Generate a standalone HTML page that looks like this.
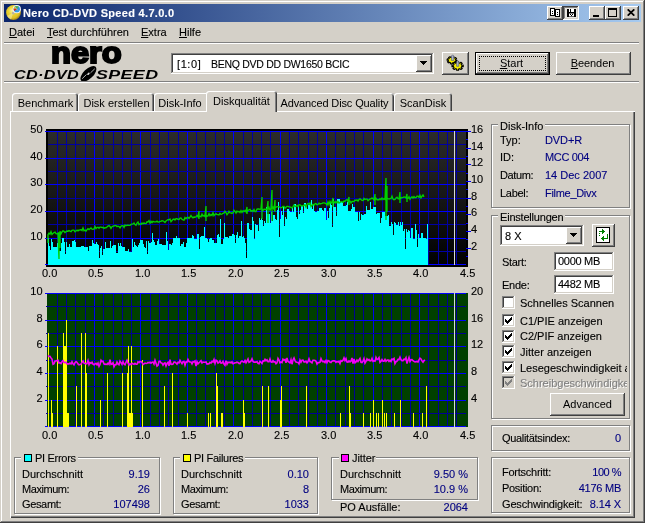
<!DOCTYPE html>
<html lang="de"><head><meta charset="utf-8"><title>Nero CD-DVD Speed 4.7.0.0</title>
<style>
*{box-sizing:border-box;margin:0;padding:0}
html,body{width:645px;height:523px;overflow:hidden;background:#d4d0c8}
body{position:relative;font-family:"Liberation Sans",sans-serif;font-size:11px;line-height:13px;color:#000}
.abs,.t,.charts{position:absolute}
.t{white-space:nowrap;height:13px;-webkit-text-stroke:.12px}
.charts{left:0;top:0}
.nv{color:#000080}
u{text-decoration:underline;text-underline-offset:1px}
/* window frame */
#frame{left:0;top:0;width:645px;height:523px;box-shadow:inset -1px -1px #404040,inset 1px 1px #d4d0c8,inset -2px -2px #808080,inset 2px 2px #fff}
#title{left:4px;top:4px;width:637px;height:18px;background:linear-gradient(to right,#0a246a,#a6caf0)}
#title .cap{left:19px;top:2.6px;color:#fff;font-weight:bold;font-size:11px;letter-spacing:.31px}
.btn{background:#d4d0c8;box-shadow:inset -1px -1px #404040,inset 1px 1px #fff,inset -2px -2px #808080,inset 2px 2px #d4d0c8}
.btn.pressed{box-shadow:inset -1px -1px #fff,inset 1px 1px #404040,inset -2px -2px #d4d0c8,inset 2px 2px #808080;background:#e9e7e3}
.btn .c{position:absolute;left:0;right:0;text-align:center;top:5px;height:13px}
.sunk{background:#fff;box-shadow:inset -1px -1px #fff,inset 1px 1px #808080,inset -2px -2px #d4d0c8,inset 2px 2px #404040}
.hsep{height:2px;border-top:1px solid #808080;border-bottom:1px solid #fff}
.grp{border:1px solid #808080;box-shadow:1px 1px #fff,inset 1px 1px #fff}
.gl{background:#d4d0c8;padding:0 2px}
.tab{top:93px;height:18px;background:#d4d0c8;border-top-left-radius:3px;border-top-right-radius:3px;box-shadow:inset 1px 1px #fff,inset -1px 0 #404040,inset -2px 0 #808080}
.tab.sel{top:91px;height:21px;z-index:3}
.tab.nr{box-shadow:inset 1px 1px #fff;border-top-right-radius:0}
.tab.nl{box-shadow:inset 0 1px #fff,inset -1px 0 #404040,inset -2px 0 #808080;border-top-left-radius:0}
.tab .c{position:absolute;left:0;right:0;text-align:center;top:4px;height:13px;white-space:nowrap}
.tab.sel .c{top:4px}
#page{left:10px;top:111px;width:625px;height:407px;box-shadow:inset 1px 1px #fff,inset -1px -1px #404040,inset -2px -2px #808080}
.cb{width:13px;height:13px}
.cb svg{position:absolute;left:3px;top:3px}
.dis{color:#808080;text-shadow:1px 1px #fff}
.sw{width:8px;height:8px;border:1px solid #000}
#root{position:absolute;left:0;top:0;width:645px;height:523px;will-change:transform}
</style></head><body><div id="root">
<div id="frame" class="abs"></div>
<div id="title" class="abs">
 <svg class="abs" style="left:2px;top:1px" width="16" height="16" viewBox="0 0 16 16"><defs><radialGradient id="cd" cx=".42" cy=".38" r=".62"><stop offset="0" stop-color="#fbf3a8"/><stop offset=".45" stop-color="#ead22c"/><stop offset=".8" stop-color="#dcc026"/><stop offset="1" stop-color="#a88818"/></radialGradient></defs><circle cx="7.5" cy="7.5" r="7.4" fill="url(#cd)"/><path d="M7.500,7.500 L1,11 A7.400,7.400 0 0 0 5,14.400z" fill="#f6eeb0" opacity=".55"/><circle cx="7.300" cy="8" r="1.5" fill="#b8b4a0"/><circle cx="10.8" cy="4.200" r="4.100" fill="#f4f6fa"/><circle cx="10.8" cy="4.200" r="3.100" fill="#2a98e8"/><path d="M7.900,3 A3.100,3.100 0 0 0 8.300,6 L10.800,4.200z" fill="#e02810"/><path d="M8.600,2 A3.100,3.100 0 0 1 12.600,1.700 L10.800,4.200z" fill="#58b848"/><path d="M8.700,1.700 L11.800,5.400" stroke="#f0a0a0" stroke-width=".8"/><path d="M8.300,2.200 L9.200,3.600" stroke="#f0e020" stroke-width="1.100"/></svg>
 <div class="t cap">Nero CD-DVD Speed 4.7.0.0</div>
 <div class="abs btn" style="left:543px;top:2px;width:16px;height:14px"><svg class="abs" style="left:0;top:0" width="16" height="14" viewBox="0 0 16 14" shape-rendering="crispEdges"><rect x="3.5" y="2.5" width="4" height="7" fill="#fff" stroke="#000"/><rect x="8.5" y="3.5" width="4" height="7" fill="#fff" stroke="#000"/><path d="M5,5h1v1h-1zM5,7h1v1h-1zM10,6h1v1h-1zM10,8h1v1h-1z" fill="#000"/></svg></div>
 <div class="abs btn pressed" style="left:559px;top:2px;width:16px;height:14px"><svg class="abs" style="left:0;top:0" width="16" height="14" viewBox="0 0 16 14" shape-rendering="crispEdges"><rect x="4" y="3" width="9" height="8" fill="#000"/><rect x="6" y="3" width="5" height="3" fill="#fff"/><rect x="7" y="3" width="1" height="3" fill="#000"/><rect x="6" y="7.5" width="5" height="2.900" fill="#fff" shape-rendering="auto"/><path d="M7,8h1v1h-1zM9,8h1v1h-1zM8,9h1v1h-1z" fill="#000"/></svg></div>
 <div class="abs btn" style="left:585px;top:2px;width:16px;height:14px"><div class="abs" style="left:4px;top:9px;width:6px;height:2px;background:#000"></div></div>
 <div class="abs btn" style="left:601px;top:2px;width:16px;height:14px"><div class="abs" style="left:3px;top:2px;width:9px;height:9px;border:1px solid #000;border-top-width:2px"></div></div>
 <div class="abs btn" style="left:619px;top:2px;width:16px;height:14px"><svg class="abs" style="left:4px;top:3px" width="8" height="7" viewBox="0 0 8 7"><path d="M.7,.3 L7.300,6.700 M7.300,.3 L.7,6.700" stroke="#000" stroke-width="1.7" fill="none"/></svg></div>
</div>
<!-- menu -->
<div class="t" style="left:9px;top:26px"><u>D</u>atei</div>
<div class="t" style="left:47px;top:26px"><u>T</u>est durchführen</div>
<div class="t" style="left:141px;top:26px"><u>E</u>xtra</div>
<div class="t" style="left:179px;top:26px"><u>H</u>ilfe</div>
<div class="abs hsep" style="left:4px;top:42px;width:635px"></div>
<!-- logo -->
<div class="t" id="nero" style="left:50.5px;top:37px;height:32px;line-height:32px;font-size:29px;font-weight:bold;letter-spacing:0;-webkit-text-stroke:2px #000;transform-origin:0 0;transform:scaleX(1.125)">nero</div>
<div class="t" id="cds" style="left:13.5px;top:67px;height:16px;line-height:16px;font-size:13.5px;font-weight:bold;font-style:italic;transform-origin:0 0;transform:scaleX(1.2);letter-spacing:.3px;-webkit-text-stroke:0">CD·DVD</div>
<svg class="abs" style="left:79px;top:65px" width="20" height="18" viewBox="0 0 20 18"><g transform="rotate(-44 9.4 8.8)"><ellipse cx="9.4" cy="8.8" rx="10" ry="4.9" fill="#000"/><path d="M1.500,8 H7.500 M11.500,9.600 H17.500" stroke="#b8b8b8" stroke-width=".9"/><ellipse cx="9.4" cy="8.8" rx="1.5" ry=".9" fill="#d8d8d8"/></g></svg>
<div class="t" id="spd" style="left:96px;top:67px;height:16px;line-height:16px;font-size:13.5px;font-weight:bold;font-style:italic;transform-origin:0 0;transform:scaleX(1.32);letter-spacing:.3px;-webkit-text-stroke:0">SPEED</div>
<!-- combobox -->
<div class="abs sunk" style="left:171px;top:53px;width:263px;height:21px"><div class="t" style="left:6px;top:5px;letter-spacing:.6px">[1:0]</div><div class="t" style="left:39.5px;top:5px;letter-spacing:-.3px;transform-origin:0 0;transform:scaleX(.955)">BENQ DVD DD DW1650 BCIC</div>
 <div class="abs btn" style="left:245px;top:2px;width:16px;height:17px"><svg class="abs" style="left:4px;top:6px" width="7" height="4" viewBox="0 0 7 4" shape-rendering="crispEdges"><path d="M0,0h7l-3.5,4z" fill="#000"/></svg></div></div>
<div class="abs btn" style="left:442px;top:52px;width:27px;height:23px"><svg class="abs" style="left:0;top:0" width="27" height="23" viewBox="0 0 27 23"><g stroke="#000" stroke-width="1.1" fill="#f4ee00" stroke-linejoin="round"><path d="M15.00,8.31 L14.66,9.62 L13.38,9.38 L12.67,10.20 L13.44,11.03 L12.01,11.77 L11.32,10.90 L10.07,11.09 L9.86,12.10 L8.18,11.83 L8.49,10.84 L7.44,10.28 L6.37,10.88 L5.42,9.76 L6.54,9.23 L6.30,8.26 L5.00,8.09 L5.34,6.78 L6.62,7.02 L7.33,6.20 L6.56,5.37 L7.99,4.63 L8.68,5.50 L9.93,5.31 L10.14,4.30 L11.82,4.57 L11.51,5.56 L12.56,6.12 L13.63,5.52 L14.58,6.64 L13.46,7.17 L13.70,8.14Z"/><path d="M21.22,13.14 L21.22,14.66 L19.70,14.61 L19.15,15.66 L20.26,16.46 L18.88,17.54 L17.85,16.67 L16.52,17.10 L16.58,18.28 L14.62,18.28 L14.68,17.10 L13.35,16.67 L12.32,17.54 L10.94,16.46 L12.05,15.66 L11.50,14.61 L9.98,14.66 L9.98,13.14 L11.50,13.19 L12.05,12.14 L10.94,11.34 L12.32,10.26 L13.35,11.13 L14.68,10.70 L14.62,9.52 L16.58,9.52 L16.52,10.70 L17.85,11.13 L18.88,10.26 L20.26,11.34 L19.15,12.14 L19.70,13.19Z"/></g><path d="M9.400,8.500 V4 L10.600,2.800 L11.800,4 V8.500z" fill="#a8b0c8" stroke="#50586c" stroke-width=".6"/><path d="M14.600,14.300 V9.800 L15.700,8.600 L16.800,9.800 V14.300z" fill="#a8b0c8" stroke="#50586c" stroke-width=".6"/></svg></div>
<div class="abs" style="left:475px;top:52px;width:75px;height:23px;background:#000"><div class="abs btn" style="left:1px;top:1px;width:73px;height:21px"><div class="abs" style="left:3px;top:3px;right:3px;bottom:3px;border:1px dotted #000"></div><div class="c" style="top:4px;left:-2px"><u>S</u>tart</div></div></div>
<div class="abs btn" style="left:556px;top:52px;width:75px;height:23px"><div class="c" style="left:-2px;letter-spacing:-.1px"><u>B</u>eenden</div></div>
<div class="abs hsep" style="left:4px;top:81px;width:635px"></div>
<!-- tabs -->
<div id="page" class="abs"></div>
<div class="abs tab" style="left:12px;width:66px"><div class="c" style="left:1px">Benchmark</div></div>
<div class="abs tab" style="left:78px;width:76px"><div class="c" style="left:1px">Disk erstellen</div></div>
<div class="abs tab nr" style="left:154px;width:54px"><div class="c" style="right:2px">Disk-Info</div></div>
<div class="abs tab nl" style="left:275px;width:119px"><div class="c" style="left:0;letter-spacing:-.13px">Advanced Disc Quality</div></div>
<div class="abs tab" style="left:394px;width:58px"><div class="c">ScanDisk</div></div>
<div class="abs tab sel" style="left:206px;width:71px"><div class="c">Diskqualität</div></div>
<svg class="charts" width="645" height="523" viewBox="0 0 645 523" shape-rendering="crispEdges"><defs><linearGradient id="g1" x1="0" y1="0" x2="0" y2="1"><stop offset="0" stop-color="#2c2c2c"/><stop offset="1" stop-color="#000"/></linearGradient></defs><rect x="46" y="129" width="422" height="138" fill="#000"/><rect x="48" y="131" width="418" height="134" fill="url(#g1)"/><rect x="57" y="131" width="1" height="134" fill="#0000a4"/><rect x="66" y="131" width="1" height="134" fill="#0000a4"/><rect x="75" y="131" width="1" height="134" fill="#0000a4"/><rect x="85" y="131" width="1" height="134" fill="#0000a4"/><rect x="94" y="131" width="1" height="134" fill="#0000ff"/><rect x="103" y="131" width="1" height="134" fill="#0000a4"/><rect x="113" y="131" width="1" height="134" fill="#0000a4"/><rect x="122" y="131" width="1" height="134" fill="#0000a4"/><rect x="131" y="131" width="1" height="134" fill="#0000a4"/><rect x="140" y="131" width="1" height="134" fill="#0000ff"/><rect x="150" y="131" width="1" height="134" fill="#0000a4"/><rect x="159" y="131" width="1" height="134" fill="#0000a4"/><rect x="168" y="131" width="1" height="134" fill="#0000a4"/><rect x="178" y="131" width="1" height="134" fill="#0000a4"/><rect x="187" y="131" width="1" height="134" fill="#0000ff"/><rect x="196" y="131" width="1" height="134" fill="#0000a4"/><rect x="205" y="131" width="1" height="134" fill="#0000a4"/><rect x="215" y="131" width="1" height="134" fill="#0000a4"/><rect x="224" y="131" width="1" height="134" fill="#0000a4"/><rect x="233" y="131" width="1" height="134" fill="#0000ff"/><rect x="243" y="131" width="1" height="134" fill="#0000a4"/><rect x="252" y="131" width="1" height="134" fill="#0000a4"/><rect x="261" y="131" width="1" height="134" fill="#0000a4"/><rect x="270" y="131" width="1" height="134" fill="#0000a4"/><rect x="280" y="131" width="1" height="134" fill="#0000ff"/><rect x="289" y="131" width="1" height="134" fill="#0000a4"/><rect x="298" y="131" width="1" height="134" fill="#0000a4"/><rect x="308" y="131" width="1" height="134" fill="#0000a4"/><rect x="317" y="131" width="1" height="134" fill="#0000a4"/><rect x="326" y="131" width="1" height="134" fill="#0000ff"/><rect x="335" y="131" width="1" height="134" fill="#0000a4"/><rect x="345" y="131" width="1" height="134" fill="#0000a4"/><rect x="354" y="131" width="1" height="134" fill="#0000a4"/><rect x="363" y="131" width="1" height="134" fill="#0000a4"/><rect x="373" y="131" width="1" height="134" fill="#0000ff"/><rect x="382" y="131" width="1" height="134" fill="#0000a4"/><rect x="391" y="131" width="1" height="134" fill="#0000a4"/><rect x="401" y="131" width="1" height="134" fill="#0000a4"/><rect x="410" y="131" width="1" height="134" fill="#0000a4"/><rect x="419" y="131" width="1" height="134" fill="#0000ff"/><rect x="428" y="131" width="1" height="134" fill="#0000a4"/><rect x="438" y="131" width="1" height="134" fill="#0000a4"/><rect x="447" y="131" width="1" height="134" fill="#0000a4"/><rect x="456" y="131" width="1" height="134" fill="#0000a4"/><rect x="48" y="264" width="418" height="1" fill="#0000ff"/><rect x="45" y="264" width="3" height="1" fill="#0000ff"/><rect x="48" y="251" width="418" height="1" fill="#0000a4"/><rect x="48" y="238" width="418" height="1" fill="#0000ff"/><rect x="45" y="238" width="3" height="1" fill="#0000ff"/><rect x="48" y="224" width="418" height="1" fill="#0000a4"/><rect x="48" y="211" width="418" height="1" fill="#0000ff"/><rect x="45" y="211" width="3" height="1" fill="#0000ff"/><rect x="48" y="198" width="418" height="1" fill="#0000a4"/><rect x="48" y="184" width="418" height="1" fill="#0000ff"/><rect x="45" y="184" width="3" height="1" fill="#0000ff"/><rect x="48" y="171" width="418" height="1" fill="#0000a4"/><rect x="48" y="158" width="418" height="1" fill="#0000ff"/><rect x="45" y="158" width="3" height="1" fill="#0000ff"/><rect x="48" y="144" width="418" height="1" fill="#0000a4"/><rect x="48" y="131" width="418" height="1" fill="#0000ff"/><rect x="45" y="131" width="3" height="1" fill="#0000ff"/><rect x="466" y="256" width="2" height="1" fill="#0000ff"/><rect x="466" y="248" width="5" height="1" fill="#0000ff"/><rect x="466" y="239" width="2" height="1" fill="#0000ff"/><rect x="466" y="231" width="5" height="1" fill="#0000ff"/><rect x="466" y="223" width="2" height="1" fill="#0000ff"/><rect x="466" y="214" width="5" height="1" fill="#0000ff"/><rect x="466" y="206" width="2" height="1" fill="#0000ff"/><rect x="466" y="198" width="5" height="1" fill="#0000ff"/><rect x="466" y="189" width="2" height="1" fill="#0000ff"/><rect x="466" y="181" width="5" height="1" fill="#0000ff"/><rect x="466" y="173" width="2" height="1" fill="#0000ff"/><rect x="466" y="164" width="5" height="1" fill="#0000ff"/><rect x="466" y="156" width="2" height="1" fill="#0000ff"/><rect x="466" y="148" width="5" height="1" fill="#0000ff"/><rect x="466" y="139" width="2" height="1" fill="#0000ff"/><rect x="466" y="131" width="5" height="1" fill="#0000ff"/><rect x="454" y="131" width="1" height="134" fill="#d8d8d8"/><path d="M48,265V238H49V246H50V250H51V239H52V242H53V247H55V247H56V247H57V243H58V245H59V251H61V243H62V238H64V242H65V254H66V242H67V247H68V247H69V244H70V247H71V247H72V241H73V241H74V240H75V242H76V247H77V247H78V247H81V246H84V247H85V247H88V251H89V246H92V240H93V243H94V244H96V242H97V244H98V245H99V258H100V248H101V246H102V255H103V249H105V242H106V248H108V248H110V241H111V248H112V246H113V245H115V245H116V253H118V243H119V246H120V243H121V246H122V247H124V247H125V251H128V249H129V252H132V239H133V247H134V242H135V245H136V246H137V247H138V245H139V243H140V240H141V240H143V244H144V247H145V248H146V241H147V254H148V241H149V243H151V242H152V233H153V240H154V242H155V245H157V241H158V239H159V244H162V245H163V245H166V232H167V241H168V250H169V244H171V245H172V243H173V238H176V236H177V238H179V238H180V246H181V244H183V242H184V247H186V243H187V238H189V238H192V235H193V236H194V239H197V234H198V234H199V249H200V237H201V236H204V227H205V238H207V239H208V242H209V239H210V238H212V240H214V243H217V235H218V234H219V237H220V219H221V244H223V239H224V223H225V237H228V238H229V236H232V234H233V234H234V235H235V243H236V235H237V232H238V238H239V236H241V221H242V237H243V236H244V238H245V243H246V258H247V223H248V223H249V229H250V230H252V217H253V221H254V239H255V224H256V225H258V231H259V218H260V220H261V218H262V220H263V226H264V221H265V223H266V207H267V214H270V223H271V212H272V221H273V215H275V219H276V220H277V210H278V202H279V237H280V219H281V211H282V215H283V206H284V226H285V217H286V219H287V209H289V211H290V212H292V208H293V212H294V204H296V217H297V219H298V206H299V214H300V210H301V206H303V213H304V203H306V206H307V209H308V205H311V200H312V209H313V204H314V211H315V212H317V211H319V208H322V210H323V211H324V208H326V220H327V211H328V218H329V208H330V203H331V205H332V227H333V199H334V207H336V216H337V199H340V202H343V206H346V205H347V202H348V211H351V209H352V204H353V207H355V212H358V221H359V212H360V220H361V214H362V215H364V214H366V206H367V210H368V210H370V202H371V209H373V207H376V214H377V213H380V223H381V218H382V212H385V216H388V215H389V226H391V222H392V224H393V235H394V222H395V223H396V225H398V222H399V226H400V222H401V225H402V222H403V231H404V229H405V249H406V229H407V232H408V230H409V231H410V238H411V228H413V239H415V224H416V230H417V247H418V234H419V238H420V238H421V233H423V238H426V239H427V224H428V265Z" fill="#00ffff"/><polyline fill="none" stroke="#00d000" stroke-width="1.35" shape-rendering="auto" points="48,243 48,234.7 49,233.1 50,234.2 51,231.7 52,234.5 53,233.4 54,232.5 55,232.1 56,233.7 57,233.8 58,233.2 59,259 59,236 59,232.2 60,248 60,237 60,231.3 61,233.8 62,231.9 63,230.8 64,231.3 65,232.6 66,231.7 67,231.0 68,231.2 69,230.6 70,231.2 71,231.7 72,230.3 73,230.2 74,230.1 75,231.7 76,231.0 77,230.1 78,230.9 79,229.9 80,230.1 81,229.6 82,230.6 83,228.0 84,230.7 85,230.1 86,231.2 87,229.7 88,228.7 89,229.6 90,228.7 91,227.9 92,229.1 93,229.3 94,229.0 95,226.5 96,228.6 97,227.6 98,227.2 99,228.2 100,227.1 101,227.1 102,227.6 103,227.3 104,228.4 105,227.7 106,227.9 107,227.1 108,226.1 109,225.6 110,226.5 111,228.3 112,226.7 113,226.2 114,226.0 115,225.5 116,225.6 117,226.7 118,226.2 119,226.6 120,227.8 121,226.3 122,225.6 123,225.6 124,227.5 125,225.0 126,225.8 127,225.2 128,225.2 129,225.4 130,225.4 131,224.4 132,224.1 133,223.9 134,223.0 135,224.6 136,225.3 137,223.1 138,222.0 139,224.7 140,223.8 141,224.4 142,223.0 143,223.9 144,222.9 145,223.6 146,223.5 147,221.8 148,222.0 149,220.6 150,223.1 151,221.3 152,222.7 153,221.3 154,221.8 155,221.8 156,221.8 157,221.2 158,222.1 159,222.1 160,221.4 161,221.4 162,220.7 163,220.9 164,221.5 165,222.5 166,220.9 167,220.2 168,219.6 169,219.8 170,219.1 171,221.7 172,220.5 173,219.4 174,219.0 175,220.0 176,218.7 177,218.7 178,219.4 179,219.5 180,218.1 181,218.0 182,219.3 183,219.8 184,220.1 185,217.6 186,218.7 187,217.5 188,217.3 189,218.4 190,217.2 191,215.5 192,217.0 193,217.8 194,217.0 195,217.2 196,216.8 197,215.6 198,216.9 199,211 199,219 199,216.0 200,216.1 201,216.7 202,214.1 203,216.0 204,215.4 205,216.4 206,206 206,221 206,215.2 207,216.3 208,216.0 209,213.6 210,215.8 211,214.6 212,215.6 213,212.8 214,215.6 215,214.5 216,213.7 217,214.5 218,214.6 219,214.9 220,213.4 221,214.5 222,214.0 223,213.4 224,212.9 225,211.3 226,212.6 227,214.7 228,213.3 229,211.4 230,212.8 231,212.8 232,213.4 233,212.7 234,210.3 235,211.3 236,213.1 237,211.1 238,212.0 239,211.3 240,212.6 241,210.7 242,212.4 243,210.8 244,211.6 245,210.4 246,211.9 247,207 247,214 247,212.3 248,210.5 249,209.8 250,209.4 251,211.2 252,210.6 253,211.4 254,209.5 255,211.6 256,211.6 257,209.1 258,208.9 259,209.0 260,209.5 261,208.7 262,197 262,219 262,208.7 263,210.4 264,209.2 265,209.2 266,209.7 267,208.8 268,201 268,223 268,209.4 269,207.5 270,210.2 271,208.1 272,190 272,221 272,208.9 273,207.2 274,209.3 275,200 275,212 275,206.8 276,207.2 277,206.7 278,206.6 279,206.8 280,207.3 281,207.7 282,207.5 283,206.4 284,206.4 285,208.4 286,207.3 287,206.3 288,206.3 289,206.9 290,206.9 291,207.3 292,207.9 293,206.6 294,205.0 295,206.7 296,206.2 297,205.4 298,206.5 299,204.7 300,204.8 301,205.6 302,206.0 303,205.9 304,205.1 305,204.8 306,207.1 307,204.3 308,203.4 309,204.5 310,203.1 311,206.5 312,205.3 313,204.3 314,205.1 315,203.9 316,203.5 317,204.7 318,204.5 319,203.2 320,203.9 321,203.6 322,203.3 323,202.8 324,202.8 325,203.1 326,203.5 327,205.2 328,202.0 329,204.6 330,201.4 331,203.2 332,201.9 333,198 333,207 333,201.9 334,201.8 335,202.9 336,201.4 337,202.9 338,201.4 339,203.0 340,202.4 341,201.7 342,201.8 343,202.3 344,201.0 345,201.2 346,200.3 347,199.5 348,201.5 349,197 349,205 349,200.6 350,201.0 351,203.0 352,201.5 353,201.5 354,201.6 355,200.0 356,200.4 357,199.9 358,201.1 359,199.4 360,198.8 361,199.5 362,200.4 363,200.5 364,198.4 365,199.5 366,199.2 367,199.0 368,200.6 369,199.7 370,199.0 371,198.9 372,197.9 373,198.8 374,199.8 375,194 375,205 375,199.9 376,198.2 377,199.8 378,199.5 379,199.8 380,198.7 381,199.7 382,198.0 383,199.5 384,198.7 385,199.5 386,178 386,220 386,197.7 387,186 387,212 387,198.2 388,198.7 389,199.1 390,198.7 391,198.6 392,196.2 393,199.1 394,199.7 395,199.4 396,197.9 397,197.2 398,198.7 399,198.9 400,192 400,203 400,196.9 401,198.2 402,197.4 403,197.6 404,196.9 405,197.1 406,197.9 407,194 407,202 407,198.7 408,198.4 409,196.8 410,199.2 411,197.6 412,196.8 413,198.1 414,196.6 415,197.8 416,197.6 417,196.1 418,196.2 419,197.5 420,195.2 421,197.9 422,196.2 423,195.0 424,196.9"/><rect x="47" y="293" width="421" height="134" fill="#004000"/><rect x="57" y="293" width="1" height="134" fill="#000094"/><rect x="66" y="293" width="1" height="134" fill="#000094"/><rect x="75" y="293" width="1" height="134" fill="#000094"/><rect x="85" y="293" width="1" height="134" fill="#000094"/><rect x="94" y="293" width="1" height="134" fill="#0000f0"/><rect x="103" y="293" width="1" height="134" fill="#000094"/><rect x="113" y="293" width="1" height="134" fill="#000094"/><rect x="122" y="293" width="1" height="134" fill="#000094"/><rect x="131" y="293" width="1" height="134" fill="#000094"/><rect x="140" y="293" width="1" height="134" fill="#0000f0"/><rect x="150" y="293" width="1" height="134" fill="#000094"/><rect x="159" y="293" width="1" height="134" fill="#000094"/><rect x="168" y="293" width="1" height="134" fill="#000094"/><rect x="178" y="293" width="1" height="134" fill="#000094"/><rect x="187" y="293" width="1" height="134" fill="#0000f0"/><rect x="196" y="293" width="1" height="134" fill="#000094"/><rect x="205" y="293" width="1" height="134" fill="#000094"/><rect x="215" y="293" width="1" height="134" fill="#000094"/><rect x="224" y="293" width="1" height="134" fill="#000094"/><rect x="233" y="293" width="1" height="134" fill="#0000f0"/><rect x="243" y="293" width="1" height="134" fill="#000094"/><rect x="252" y="293" width="1" height="134" fill="#000094"/><rect x="261" y="293" width="1" height="134" fill="#000094"/><rect x="270" y="293" width="1" height="134" fill="#000094"/><rect x="280" y="293" width="1" height="134" fill="#0000f0"/><rect x="289" y="293" width="1" height="134" fill="#000094"/><rect x="298" y="293" width="1" height="134" fill="#000094"/><rect x="308" y="293" width="1" height="134" fill="#000094"/><rect x="317" y="293" width="1" height="134" fill="#000094"/><rect x="326" y="293" width="1" height="134" fill="#0000f0"/><rect x="335" y="293" width="1" height="134" fill="#000094"/><rect x="345" y="293" width="1" height="134" fill="#000094"/><rect x="354" y="293" width="1" height="134" fill="#000094"/><rect x="363" y="293" width="1" height="134" fill="#000094"/><rect x="373" y="293" width="1" height="134" fill="#0000f0"/><rect x="382" y="293" width="1" height="134" fill="#000094"/><rect x="391" y="293" width="1" height="134" fill="#000094"/><rect x="401" y="293" width="1" height="134" fill="#000094"/><rect x="410" y="293" width="1" height="134" fill="#000094"/><rect x="419" y="293" width="1" height="134" fill="#0000f0"/><rect x="428" y="293" width="1" height="134" fill="#000094"/><rect x="438" y="293" width="1" height="134" fill="#000094"/><rect x="447" y="293" width="1" height="134" fill="#000094"/><rect x="456" y="293" width="1" height="134" fill="#000094"/><rect x="46" y="426" width="420" height="1" fill="#0000ff"/><rect x="45" y="426" width="2" height="1" fill="#0000ff"/><rect x="46" y="413" width="420" height="1" fill="#000094"/><rect x="46" y="400" width="420" height="1" fill="#0000ff"/><rect x="45" y="400" width="2" height="1" fill="#0000ff"/><rect x="46" y="386" width="420" height="1" fill="#000094"/><rect x="46" y="373" width="420" height="1" fill="#0000ff"/><rect x="45" y="373" width="2" height="1" fill="#0000ff"/><rect x="46" y="360" width="420" height="1" fill="#000094"/><rect x="46" y="346" width="420" height="1" fill="#0000ff"/><rect x="45" y="346" width="2" height="1" fill="#0000ff"/><rect x="46" y="333" width="420" height="1" fill="#000094"/><rect x="46" y="320" width="420" height="1" fill="#0000ff"/><rect x="45" y="320" width="2" height="1" fill="#0000ff"/><rect x="46" y="306" width="420" height="1" fill="#000094"/><rect x="46" y="293" width="420" height="1" fill="#0000ff"/><rect x="45" y="293" width="2" height="1" fill="#0000ff"/><rect x="454" y="293" width="1" height="134" fill="#d8d8d8"/><rect x="48" y="333" width="1" height="94" fill="#ffff00"/><rect x="51" y="400" width="1" height="27" fill="#ffff00"/><rect x="52" y="413" width="1" height="14" fill="#ffff00"/><rect x="57" y="346" width="1" height="81" fill="#ffff00"/><rect x="63" y="333" width="1" height="94" fill="#ffff00"/><rect x="64" y="346" width="1" height="81" fill="#ffff00"/><rect x="65" y="346" width="1" height="81" fill="#ffff00"/><rect x="66" y="320" width="1" height="107" fill="#ffff00"/><rect x="67" y="413" width="1" height="14" fill="#ffff00"/><rect x="68" y="413" width="1" height="14" fill="#ffff00"/><rect x="76" y="386" width="1" height="41" fill="#ffff00"/><rect x="81" y="333" width="1" height="94" fill="#ffff00"/><rect x="85" y="333" width="1" height="94" fill="#ffff00"/><rect x="86" y="373" width="1" height="54" fill="#ffff00"/><rect x="100" y="400" width="1" height="27" fill="#ffff00"/><rect x="107" y="373" width="1" height="54" fill="#ffff00"/><rect x="122" y="373" width="1" height="54" fill="#ffff00"/><rect x="127" y="373" width="1" height="54" fill="#ffff00"/><rect x="128" y="346" width="1" height="81" fill="#ffff00"/><rect x="129" y="413" width="1" height="14" fill="#ffff00"/><rect x="130" y="413" width="1" height="14" fill="#ffff00"/><rect x="131" y="346" width="1" height="81" fill="#ffff00"/><rect x="132" y="413" width="1" height="14" fill="#ffff00"/><rect x="142" y="360" width="1" height="67" fill="#ffff00"/><rect x="164" y="386" width="1" height="41" fill="#ffff00"/><rect x="172" y="373" width="1" height="54" fill="#ffff00"/><rect x="187" y="413" width="1" height="14" fill="#ffff00"/><rect x="208" y="413" width="1" height="14" fill="#ffff00"/><rect x="210" y="413" width="1" height="14" fill="#ffff00"/><rect x="216" y="373" width="1" height="54" fill="#ffff00"/><rect x="217" y="386" width="1" height="41" fill="#ffff00"/><rect x="221" y="413" width="1" height="14" fill="#ffff00"/><rect x="222" y="413" width="1" height="14" fill="#ffff00"/><rect x="243" y="400" width="1" height="27" fill="#ffff00"/><rect x="244" y="413" width="1" height="14" fill="#ffff00"/><rect x="262" y="386" width="1" height="41" fill="#ffff00"/><rect x="268" y="386" width="1" height="41" fill="#ffff00"/><rect x="280" y="400" width="1" height="27" fill="#ffff00"/><rect x="281" y="386" width="1" height="41" fill="#ffff00"/><rect x="306" y="386" width="1" height="41" fill="#ffff00"/><rect x="340" y="413" width="1" height="14" fill="#ffff00"/><rect x="349" y="386" width="1" height="41" fill="#ffff00"/><rect x="350" y="413" width="1" height="14" fill="#ffff00"/><rect x="363" y="413" width="1" height="14" fill="#ffff00"/><rect x="370" y="413" width="1" height="14" fill="#ffff00"/><rect x="373" y="400" width="1" height="27" fill="#ffff00"/><rect x="376" y="413" width="1" height="14" fill="#ffff00"/><rect x="378" y="413" width="1" height="14" fill="#ffff00"/><rect x="382" y="400" width="1" height="27" fill="#ffff00"/><rect x="384" y="413" width="1" height="14" fill="#ffff00"/><rect x="386" y="413" width="1" height="14" fill="#ffff00"/><rect x="394" y="413" width="1" height="14" fill="#ffff00"/><rect x="400" y="400" width="1" height="27" fill="#ffff00"/><rect x="413" y="413" width="1" height="14" fill="#ffff00"/><rect x="422" y="413" width="1" height="14" fill="#ffff00"/><rect x="426" y="386" width="1" height="41" fill="#ffff00"/><polyline fill="none" stroke="#f400f4" stroke-width="1.6" shape-rendering="auto" points="48,355.4 49,356.5 50,356.4 51,357.9 52,359.2 53,364.3 54,363.7 55,361.1 56,361.0 57,360.5 58,360.2 59,363.0 60,362.8 61,363.5 62,361.8 63,360.6 64,362.5 65,362.6 66,362.2 67,363.9 68,363.9 69,364.0 70,363.1 71,364.0 72,361.7 73,363.8 74,364.8 75,362.7 76,361.6 77,362.4 78,363.9 79,364.8 80,364.6 81,364.2 82,362.4 83,361.0 84,363.2 85,363.5 86,363.8 87,363.5 88,360.6 89,364.6 90,362.6 91,363.4 92,362.2 93,364.2 94,364.7 95,364.0 96,363.4 97,364.8 98,363.1 99,366.4 100,364.5 101,360.3 102,361.6 103,361.3 104,363.8 105,364.3 106,364.1 107,364.6 108,363.3 109,364.4 110,359.7 111,364.5 112,364.1 113,362.8 114,366.7 115,364.8 116,364.7 117,362.1 118,364.1 119,364.7 120,361.1 121,362.6 122,364.3 123,361.7 124,364.1 125,364.8 126,362.2 127,360.2 128,363.0 129,365.1 130,363.8 131,364.6 132,363.2 133,363.8 134,364.2 135,363.3 136,364.3 137,364.3 138,361.8 139,362.7 140,361.4 141,361.8 142,362.4 143,364.6 144,363.8 145,363.1 146,363.5 147,363.3 148,362.5 149,362.8 150,362.3 151,363.2 152,362.2 153,362.1 154,364.0 155,360.2 156,363.2 157,366.2 158,365.4 159,361.4 160,361.2 161,362.9 162,363.1 163,365.1 164,363.3 165,362.9 166,366.0 167,363.5 168,362.4 169,365.9 170,359.7 171,364.2 172,364.4 173,364.1 174,362.1 175,362.1 176,363.0 177,364.1 178,362.4 179,362.9 180,360.4 181,362.2 182,363.7 183,361.7 184,361.4 185,365.1 186,361.9 187,362.1 188,359.5 189,361.6 190,362.0 191,362.0 192,363.9 193,361.7 194,361.9 195,361.0 196,366.0 197,361.7 198,363.8 199,362.7 200,361.7 201,360.6 202,363.0 203,362.2 204,362.3 205,362.2 206,362.0 207,364.1 208,363.9 209,363.7 210,362.3 211,363.1 212,361.3 213,362.0 214,359.6 215,363.4 216,360.2 217,360.9 218,363.1 219,362.5 220,360.9 221,363.2 222,363.1 223,361.3 224,364.0 225,365.2 226,360.7 227,364.2 228,362.1 229,362.6 230,362.2 231,362.9 232,361.9 233,363.7 234,363.3 235,362.7 236,362.8 237,362.2 238,362.4 239,363.4 240,363.6 241,361.7 242,361.0 243,361.8 244,362.3 245,360.5 246,362.7 247,361.0 248,358.9 249,362.4 250,361.8 251,360.9 252,358.8 253,361.4 254,362.1 255,362.1 256,362.1 257,361.5 258,363.4 259,363.7 260,361.3 261,362.3 262,363.4 263,360.9 264,361.1 265,359.3 266,360.8 267,359.9 268,361.8 269,361.8 270,358.9 271,361.9 272,362.3 273,360.6 274,362.0 275,361.7 276,363.8 277,362.9 278,358.4 279,360.1 280,362.7 281,362.1 282,362.6 283,359.2 284,360.1 285,359.5 286,362.8 287,358.0 288,361.4 289,362.1 290,362.9 291,359.7 292,364.2 293,359.9 294,357.9 295,360.6 296,362.0 297,362.3 298,362.4 299,363.9 300,360.0 301,362.1 302,360.2 303,360.1 304,361.9 305,361.9 306,361.1 307,362.8 308,361.6 309,358.8 310,361.6 311,361.9 312,362.8 313,360.3 314,360.3 315,360.6 316,361.2 317,364.0 318,362.5 319,362.6 320,362.2 321,358.6 322,361.0 323,361.7 324,361.2 325,362.5 326,360.5 327,362.6 328,360.5 329,360.9 330,362.0 331,362.5 332,361.1 333,360.9 334,360.9 335,361.0 336,362.3 337,361.4 338,362.0 339,361.3 340,363.5 341,360.6 342,361.2 343,360.2 344,357.9 345,360.5 346,358.6 347,362.0 348,362.1 349,360.9 350,361.9 351,361.0 352,357.9 353,363.7 354,358.9 355,362.8 356,361.9 357,360.1 358,361.6 359,359.9 360,358.4 361,362.3 362,362.5 363,361.1 364,358.7 365,363.1 366,361.4 367,359.0 368,360.4 369,359.5 370,360.9 371,360.7 372,358.4 373,361.4 374,360.8 375,361.2 376,357.3 377,359.5 378,359.1 379,357.6 380,362.4 381,361.3 382,359.6 383,361.1 384,361.1 385,359.4 386,361.4 387,360.2 388,360.0 389,361.5 390,360.2 391,361.5 392,359.1 393,359.5 394,358.5 395,363.6 396,361.7 397,361.2 398,359.4 399,359.6 400,357.1 401,359.7 402,360.6 403,360.6 404,359.2 405,359.6 406,357.7 407,363.5 408,360.3 409,357.5 410,361.4 411,359.8 412,359.6 413,360.7 414,361.4 415,362.0 416,361.7 417,361.4 418,362.1 419,359.9 420,358.1 421,358.9 422,360.9 423,362.1 424,360.7 425,360.0"/></svg>
<div class="t " style="right:602.4px;top:230px;">10</div>
<div class="t " style="right:602.4px;top:203px;">20</div>
<div class="t " style="right:602.4px;top:176px;">30</div>
<div class="t " style="right:602.4px;top:150px;">40</div>
<div class="t " style="right:602.4px;top:123px;">50</div>
<div class="t " style="left:471px;top:240px;">2</div>
<div class="t " style="left:471px;top:223px;">4</div>
<div class="t " style="left:471px;top:206px;">6</div>
<div class="t " style="left:471px;top:190px;">8</div>
<div class="t " style="left:471px;top:173px;">10</div>
<div class="t " style="left:471px;top:156px;">12</div>
<div class="t " style="left:471px;top:140px;">14</div>
<div class="t " style="left:471px;top:123px;">16</div>
<div class="t " style="left:42px;top:267px;">0.0</div>
<div class="t " style="left:88px;top:267px;">0.5</div>
<div class="t " style="left:135px;top:267px;">1.0</div>
<div class="t " style="left:181px;top:267px;">1.5</div>
<div class="t " style="left:228px;top:267px;">2.0</div>
<div class="t " style="left:274px;top:267px;">2.5</div>
<div class="t " style="left:321px;top:267px;">3.0</div>
<div class="t " style="left:367px;top:267px;">3.5</div>
<div class="t " style="left:413px;top:267px;">4.0</div>
<div class="t " style="left:460px;top:267px;">4.5</div>
<div class="t " style="right:602.4px;top:392px;">2</div>
<div class="t " style="right:602.4px;top:365px;">4</div>
<div class="t " style="right:602.4px;top:338px;">6</div>
<div class="t " style="right:602.4px;top:312px;">8</div>
<div class="t " style="right:602.4px;top:285px;">10</div>
<div class="t " style="left:471px;top:392px;">4</div>
<div class="t " style="left:471px;top:365px;">8</div>
<div class="t " style="left:471px;top:338px;">12</div>
<div class="t " style="left:471px;top:312px;">16</div>
<div class="t " style="left:471px;top:285px;">20</div>
<div class="t " style="left:42px;top:429px;">0.0</div>
<div class="t " style="left:88px;top:429px;">0.5</div>
<div class="t " style="left:135px;top:429px;">1.0</div>
<div class="t " style="left:181px;top:429px;">1.5</div>
<div class="t " style="left:228px;top:429px;">2.0</div>
<div class="t " style="left:274px;top:429px;">2.5</div>
<div class="t " style="left:321px;top:429px;">3.0</div>
<div class="t " style="left:367px;top:429px;">3.5</div>
<div class="t " style="left:413px;top:429px;">4.0</div>
<div class="t " style="left:460px;top:429px;">4.5</div>
<!-- Disk-Info group -->
<div class="abs grp" style="left:491px;top:124px;width:139px;height:84px"></div>
<div class="t gl" style="left:498px;top:120px">Disk-Info</div>
<div class="t" style="left:500px;top:134px">Typ:</div><div class="t nv" style="left:545px;top:134px;letter-spacing:-0.1px">DVD+R</div>
<div class="t" style="left:500px;top:151px">ID:</div><div class="t nv" style="left:545px;top:151px;letter-spacing:-0.35px">MCC 004</div>
<div class="t" style="left:500px;top:169px;letter-spacing:-.4px">Datum:</div><div class="t nv" style="left:545px;top:169px;letter-spacing:0px">14 Dec 2007</div>
<div class="t" style="left:500px;top:187px;letter-spacing:-.3px">Label:</div><div class="t nv" style="left:545px;top:187px;letter-spacing:-0.3px">Filme_Divx</div>
<!-- Einstellungen -->
<div class="abs grp" style="left:491px;top:215px;width:139px;height:204px"></div>
<div class="t gl" style="left:498px;top:211px;letter-spacing:-.2px">Einstellungen</div>
<div class="abs sunk" style="left:500px;top:225px;width:84px;height:21px"><div class="t" style="left:5px;top:5px">8 X</div>
 <div class="abs btn" style="left:66px;top:2px;width:16px;height:17px"><svg class="abs" style="left:4px;top:6px" width="7" height="4" viewBox="0 0 7 4" shape-rendering="crispEdges"><path d="M0,0h7l-3.5,4z" fill="#000"/></svg></div></div>
<div class="abs btn" style="left:592px;top:224px;width:23px;height:23px"><div class="abs" style="left:4px;top:3px;width:14px;height:16px;background:#fff;border:1px solid #000"><svg class="abs" style="left:0;top:0" width="12" height="14" viewBox="0 0 12 14" shape-rendering="crispEdges"><g fill="#008000"><rect x="2" y="3" width="4" height="1"/><rect x="2" y="5" width="1" height="1"/><rect x="2" y="7" width="1" height="1"/><rect x="5" y="1" width="1" height="5"/><rect x="6" y="2" width="1" height="3"/><rect x="7" y="3" width="1" height="1"/><rect x="6" y="10" width="5" height="1"/><rect x="10" y="6" width="1" height="5"/><rect x="6" y="8" width="1" height="5"/><rect x="5" y="9" width="1" height="3"/><rect x="4" y="10" width="1" height="1"/></g></svg></div></div>
<div class="t" style="left:502px;top:256px;letter-spacing:-.3px">Start:</div>
<div class="abs sunk" style="left:554px;top:252px;width:60px;height:19px"><div class="t" style="left:4px;top:3px;letter-spacing:-.3px">0000 MB</div></div>
<div class="t" style="left:502px;top:279px;letter-spacing:-.25px">Ende:</div>
<div class="abs sunk" style="left:554px;top:275px;width:60px;height:19px"><div class="t" style="left:4px;top:3px;letter-spacing:-.3px">4482 MB</div></div>
<div class="abs" style="left:500px;top:294px;width:127px;height:98px;overflow:hidden">
 <div class="abs sunk cb" style="left:2px;top:2px"></div><div class="t" style="left:20px;top:3px">Schnelles Scannen</div>
 <div class="abs sunk cb" style="left:2px;top:20px"><svg width="7" height="7" viewBox="0 0 7 7" shape-rendering="crispEdges"><path d="M0,2v3l2,2l5,-5v-3l-5,5z" fill="#000"/></svg></div><div class="t" style="left:20px;top:21px">C1/PIE anzeigen</div>
 <div class="abs sunk cb" style="left:2px;top:36px"><svg width="7" height="7" viewBox="0 0 7 7" shape-rendering="crispEdges"><path d="M0,2v3l2,2l5,-5v-3l-5,5z" fill="#000"/></svg></div><div class="t" style="left:20px;top:36px">C2/PIF anzeigen</div>
 <div class="abs sunk cb" style="left:2px;top:51px"><svg width="7" height="7" viewBox="0 0 7 7" shape-rendering="crispEdges"><path d="M0,2v3l2,2l5,-5v-3l-5,5z" fill="#000"/></svg></div><div class="t" style="left:20px;top:52px">Jitter anzeigen</div>
 <div class="abs sunk cb" style="left:2px;top:67px"><svg width="7" height="7" viewBox="0 0 7 7" shape-rendering="crispEdges"><path d="M0,2v3l2,2l5,-5v-3l-5,5z" fill="#000"/></svg></div><div class="t" style="left:20px;top:68px">Lesegeschwindigkeit anzeigen</div>
 <div class="abs sunk cb" style="left:2px;top:82px;background:#d4d0c8"><svg width="7" height="7" viewBox="0 0 7 7" shape-rendering="crispEdges"><path d="M0,2v3l2,2l5,-5v-3l-5,5z" fill="#808080"/></svg></div><div class="t dis" style="left:20px;top:83px">Schreibgeschwindigkeit</div>
</div>
<div class="abs btn" style="left:550px;top:393px;width:75px;height:23px"><div class="c">Advanced</div></div>
<!-- Qualitätsindex -->
<div class="abs grp" style="left:491px;top:425px;width:139px;height:26px"></div>
<div class="t" style="left:502px;top:432px;letter-spacing:-.32px">Qualitätsindex:</div><div class="t nv" style="right:24px;top:432px">0</div>
<!-- Progress -->
<div class="abs grp" style="left:491px;top:457px;width:139px;height:56px"></div>
<div class="t" style="left:502px;top:466px;letter-spacing:-.25px">Fortschritt:</div><div class="t nv" style="right:24px;top:466px;letter-spacing:-.5px">100 %</div>
<div class="t" style="left:502px;top:482px;letter-spacing:-.3px">Position:</div><div class="t nv" style="right:24px;top:482px;letter-spacing:-.25px">4176 MB</div>
<div class="t" style="left:502px;top:498px;letter-spacing:-.18px">Geschwindigkeit:</div><div class="t nv" style="right:24px;top:498px;letter-spacing:-.1px">8.14 X</div>
<!-- PI Errors -->
<div class="abs grp" style="left:14px;top:457px;width:146px;height:57px"></div>
<div class="abs gl" style="left:21px;top:452px;width:57px;height:13px"></div>
<div class="abs sw" style="left:24px;top:454px;background:#00ffff"></div>
<div class="t" style="left:35px;top:452px;letter-spacing:-.3px">PI Errors</div>
<div class="t" style="left:22px;top:468px">Durchschnitt</div><div class="t nv" style="right:495px;top:468px">9.19</div>
<div class="t" style="left:22px;top:483px;letter-spacing:-.45px">Maximum:</div><div class="t nv" style="right:495px;top:483px">26</div>
<div class="t" style="left:22px;top:498px;letter-spacing:-.35px">Gesamt:</div><div class="t nv" style="right:495px;top:498px">107498</div>
<!-- PI Failures -->
<div class="abs grp" style="left:173px;top:457px;width:145px;height:57px"></div>
<div class="abs gl" style="left:180px;top:452px;width:65px;height:13px"></div>
<div class="abs sw" style="left:183px;top:454px;background:#ffff00"></div>
<div class="t" style="left:194px;top:452px;letter-spacing:-.3px">PI Failures</div>
<div class="t" style="left:181px;top:468px">Durchschnitt</div><div class="t nv" style="right:336px;top:468px">0.10</div>
<div class="t" style="left:181px;top:483px;letter-spacing:-.45px">Maximum:</div><div class="t nv" style="right:336px;top:483px">8</div>
<div class="t" style="left:181px;top:498px;letter-spacing:-.35px">Gesamt:</div><div class="t nv" style="right:336px;top:498px">1033</div>
<!-- Jitter -->
<div class="abs grp" style="left:331px;top:457px;width:147px;height:43px"></div>
<div class="abs gl" style="left:339px;top:452px;width:37px;height:13px"></div>
<div class="abs sw" style="left:341px;top:454px;background:#ff00ff"></div>
<div class="t" style="left:352px;top:452px;letter-spacing:-.1px">Jitter</div>
<div class="t" style="left:340px;top:468px">Durchschnitt</div><div class="t nv" style="right:177px;top:468px">9.50 %</div>
<div class="t" style="left:340px;top:483px;letter-spacing:-.45px">Maximum:</div><div class="t nv" style="right:177px;top:483px">10.9 %</div>
<div class="t" style="left:340px;top:501px">PO Ausfälle:</div><div class="t nv" style="right:177px;top:501px">2064</div>
</div></body></html>
